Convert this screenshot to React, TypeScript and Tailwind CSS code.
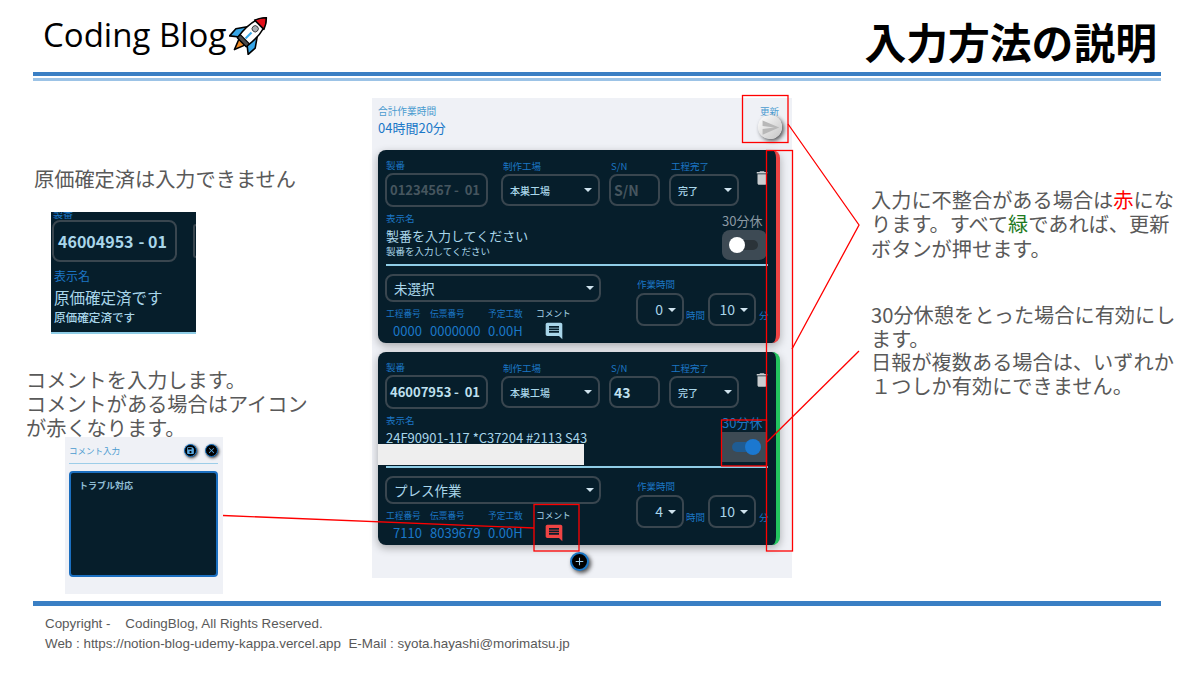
import React from 'react';

const commentPath =
  'M21.99 4c0-1.1-.89-2-1.99-2H4c-1.1 0-2 .9-2 2v12c0 1.1.9 2 2 2h14l4 4-.01-18zM18 14H6v-2h12v2zm0-3H6V9h12v2zm0-3H6V6h12v2z';
const trashPath = 'M6 19c0 1.1.9 2 2 2h8c1.1 0 2-.9 2-2V7H6v12zM19 4h-3.5l-1-1h-5l-1 1H5v2h14V4z';
const savePath =
  'M17 3H5c-1.11 0-2 .9-2 2v14c0 1.1.89 2 2 2h14c1.1 0 2-.9 2-2V7l-4-4zm-5 16c-1.66 0-3-1.34-3-3s1.34-3 3-3 3 1.34 3 3-1.34 3-3 3zm3-10H5V5h10v4z';
const closePath =
  'M19 6.41 17.59 5 12 10.59 6.41 5 5 6.41 10.59 12 5 17.59 6.41 19 12 13.41 17.59 19 19 17.59 13.41 12z';
const plusPath = 'M19 13h-6v6h-2v-6H5v-2h6V5h2v6h6v2z';
const sendPath = 'M2.01 21 23 12 2.01 3 2 10l15 2-15 2z';

function Icon({ d, className }: { d: string; className: string }) {
  return (
    <svg viewBox="0 0 24 24" className={className} fill="currentColor">
      <path d={d} />
    </svg>
  );
}

function Rocket() {
  return (
    <svg viewBox="0 0 40 40" className="w-[42px] h-[42px] shrink-0">
      <g transform="rotate(45 20 20)" stroke="#000" strokeWidth="1.5" strokeLinejoin="round">
        <path d="M14 16 L7 26 L7.5 35 L15 29 Z" fill="#38a7e8" />
        <path d="M26 16 L33 26 L32.5 35 L25 29 Z" fill="#38a7e8" />
        <path d="M16 31 L20 41 L24 31 Z" fill="#f08a24" />
        <path d="M20 -2 C27 5 28 16 26 31 H14 C12 16 13 5 20 -2Z" fill="#fff" />
        <path d="M20 -2 C23 1 25 4 26.2 7.5 H13.8 C15 4 17 1 20 -2Z" fill="#e3101a" />
        <rect x="14" y="27" width="12" height="4" fill="#4a4a4a" strokeWidth="1" />
        <circle cx="20" cy="13" r="3" fill="#a9adb3" strokeWidth="0.6" />
        <rect x="19" y="18" width="2" height="8" fill="#38a7e8" stroke="none" />
      </g>
    </svg>
  );
}

function Caret() {
  return <span className="w-0 h-0 border-x-[4px] border-t-[4px] border-x-transparent border-t-[#cfe3ee]" />;
}

function Label({ children, className = '' }: { children: React.ReactNode; className?: string }) {
  return <div className={`text-[9.5px] leading-[13px] text-[#1c76c4] whitespace-nowrap ${className}`}>{children}</div>;
}

function SelectBox({ value, className }: { value: string; className: string }) {
  return (
    <div className={`flex items-center justify-between border-2 border-[#39464f] rounded-lg text-[#a9d6ea] ${className}`}>
      <span className="font-medium text-[10px] whitespace-nowrap">{value}</span>
      <Caret />
    </div>
  );
}

function TimeBox({ value }: { value: string }) {
  return (
    <div className="w-[48px] h-[33px] flex items-center justify-end gap-[5px] pr-[6px] border-2 border-[#39464f] rounded-lg text-[#a9d6ea] text-[14px]">
      <span>{value}</span>
      <Caret />
    </div>
  );
}

type JobCard = {
  no: string;
  branch: string;
  sn: string;
  filled: boolean;
  name: string;
  sub: string;
  breakOn: boolean;
  work: string;
  hours: string;
  process: string;
  slip: string;
  edge: string;
  commentColor: string;
};

function Card({ job }: { job: JobCard }) {
  const inputColor = job.filled ? 'text-[#bfe0ef]' : 'text-[#46565f]';
  return (
    <div className={`w-[402px] h-[193px] rounded-lg bg-[#061e2b] border-r-4 ${job.edge} pt-[9px] pl-[7px] shadow-[0_3px_8px_rgba(0,0,0,0.3)] relative`}>
      <div className="flex items-start">
        <div className="w-[103px]">
          <Label className="pl-[1px]">製番</Label>
          <div className={`h-[34px] mt-[1px] flex items-center justify-between pl-[3px] pr-[6px] border-2 border-[#39464f] rounded-lg text-[13px] font-bold ${inputColor}`}>
            <span>{job.no}</span>
            <span>-&nbsp;&nbsp;{job.branch}</span>
          </div>
        </div>
        <div className="w-[99px] ml-[13px]">
          <Label className="pl-[2px] mt-[1px]">制作工場</Label>
          <SelectBox value="本巣工場" className="h-[32px] mt-[1px] pl-[7px] pr-[6px]" />
        </div>
        <div className="w-[51px] ml-[9px]">
          <Label className="pl-[2px] mt-[1px]">S/N</Label>
          <div className={`h-[32px] mt-[1px] flex items-center px-[3px] border-2 border-[#39464f] rounded-lg text-[14px] font-bold ${inputColor}`}>
            {job.sn}
          </div>
        </div>
        <div className="w-[70px] ml-[9px]">
          <Label className="pl-[2px] mt-[1px]">工程完了</Label>
          <SelectBox value="完了" className="h-[32px] mt-[1px] pl-[7px] pr-[5px]" />
        </div>
        <Icon d={trashPath} className="w-[18px] h-[18px] ml-[14px] mt-[10px] text-[#c9cdd0]" />
      </div>

      <div className="flex justify-between h-[50px] mt-[4px] pl-[1px] pr-[9px]">
        <div>
          <Label className="mt-[1px]">表示名</Label>
          <div className="text-[13px] leading-[17px] mt-[2px] text-[#a9d6ea] whitespace-nowrap">{job.name}</div>
          <div className="text-[9.5px] leading-[15px] text-[#a9d6ea] whitespace-nowrap">{job.sub}</div>
        </div>
        <div className="w-[45px] pt-[1px]">
          <div className={`text-[13px] leading-[17px] whitespace-nowrap ${job.breakOn ? 'text-[#1c76c4]' : 'text-[#8b99a3]'}`}>30分休</div>
          <div className={`h-[30px] mt-[1px] flex items-center pl-[10px] ${job.breakOn ? 'bg-[#3d4a54]' : 'bg-[#3d4a54] rounded-lg'}`}>
            <div className={`relative w-[26px] h-[10px] rounded-full ${job.breakOn ? 'bg-[#1f5c93]' : 'bg-[#2b3339]'}`}>
              <span className={`absolute top-[-3px] w-[16px] h-[16px] rounded-full ${job.breakOn ? 'right-[-3px] bg-[#1b78d0]' : 'left-[-3px] bg-white'}`} />
            </div>
          </div>
        </div>
      </div>

      <div className="h-[2px] bg-[#8fcde6] mt-[3px] ml-[1px] mr-[8px]" />

      <div className="flex mt-[8px]">
        <div className="w-[216px]">
          <div className="h-[28px] flex items-center justify-between pl-[7px] pr-[5px] border-2 border-[#39464f] rounded-lg text-[#a9d6ea] text-[13.5px]">
            <span>{job.work}</span>
            <Caret />
          </div>
          <div className="flex mt-[5px] pl-[1px]">
            <div className="w-[44px]">
              <Label className="!text-[8.7px]">工程番号</Label>
              <div className="text-[13px] leading-[18px] mt-[2px] pl-[7px] text-[#1b78c8]">{job.process}</div>
            </div>
            <div className="w-[58px]">
              <Label className="!text-[8.7px]">伝票番号</Label>
              <div className="text-[13px] leading-[18px] mt-[2px] text-[#1b78c8]">{job.slip}</div>
            </div>
            <div className="w-[48px]">
              <Label className="!text-[8.7px]">予定工数</Label>
              <div className="text-[13px] leading-[18px] mt-[2px] text-[#1b78c8]">0.00H</div>
            </div>
            <div className="w-[50px]">
              <Label className="!text-[8.7px] !text-[#a9d6ea]">コメント</Label>
              <Icon d={commentPath} className={`w-[20px] h-[20px] ml-[8px] mt-[1px] ${job.commentColor}`} />
            </div>
          </div>
        </div>
        <div className="ml-[35px] pt-[4px]">
          <Label className="pl-[1px]">作業時間</Label>
          <div className="flex mt-[2px]">
            <TimeBox value={job.hours} />
            <span className="self-end text-[9.5px] leading-[13px] text-[#1c76c4] mx-[2px] w-[20px] mb-[4px]">時間</span>
            <TimeBox value="10" />
            <span className="self-end text-[9.5px] leading-[13px] text-[#1c76c4] ml-[3px] mb-[4px]">分</span>
          </div>
        </div>
      </div>

      {job.filled && <div className="absolute left-0 top-[92px] w-[206px] h-[21px] bg-[#eeeeee]" />}
    </div>
  );
}

const jobs: JobCard[] = [
  {
    no: '01234567',
    branch: '01',
    sn: 'S/N',
    filled: false,
    name: '製番を入力してください',
    sub: '製番を入力してください',
    breakOn: false,
    work: '未選択',
    hours: '0',
    process: '0000',
    slip: '0000000',
    edge: 'border-r-[#ef4444]',
    commentColor: 'text-[#a9d6ea]',
  },
  {
    no: '46007953',
    branch: '01',
    sn: '43',
    filled: true,
    name: '24F90901-117 *C37204 #2113 S43',
    sub: '',
    breakOn: true,
    work: 'プレス作業',
    hours: '4',
    process: '7110',
    slip: '8039679',
    edge: 'border-r-[#22c55e]',
    commentColor: 'text-[#ef4444]',
  },
];

function RoundButton({ d }: { d: string }) {
  return (
    <div className="w-[13px] h-[13px] rounded-full bg-black border border-[#1b78c8] flex items-center justify-center shadow-[1px_1px_3px_rgba(0,0,0,0.8)]">
      <Icon d={d} className="w-[9px] h-[9px] text-[#5aa9e0]" />
    </div>
  );
}

export default function App() {
  return (
    <div className="relative w-[1200px] h-[674px] bg-white overflow-hidden font-['Noto_Sans_CJK_JP',sans-serif] text-[#595959]">
      {/* Slide header */}
      <header className="h-[72px] flex items-start justify-between pl-[43px] pr-[43px]">
        <div className="flex items-start pt-[14px]">
          <span className="font-['Open_Sans',sans-serif] text-[33px] leading-[42px] text-black">Coding Blog</span>
          <div className="mt-[-1px] ml-[3px]">
            <Rocket />
          </div>
        </div>
        <h1 className="text-[41.8px] leading-[60px] font-bold text-black pt-[11px] whitespace-nowrap">入力方法の説明</h1>
      </header>
      <div className="mx-[33px] w-[1128px] h-[4px] bg-[#3a7fc4]" />
      <div className="mx-[33px] w-[1128px] h-[3px] mt-[2px] bg-[#9cc3e6]" />

      {/* Slide body */}
      <div className="flex h-[520px]">
        <div className="w-[372px] shrink-0">
          <p className="ml-[34px] mt-[86px] text-[20.2px] leading-[24px] whitespace-nowrap">原価確定済は入力できません</p>

          <div className="ml-[51px] mt-[21px] w-[145px] h-[122px] bg-[#061e2b] overflow-hidden relative">
            <div className="absolute top-[-5px] left-[2px] text-[10px] leading-[13px] text-[#1c76c4]">製番</div>
            <div className="absolute top-[8px] left-[1px] w-[125px] h-[42px] flex items-center justify-between pl-[4px] pr-[8px] border-2 border-[#39464f] rounded-lg text-[#a9d6ea] text-[16px] font-bold">
              <span>46004953</span>
              <span>-&nbsp;01</span>
            </div>
            <div className="absolute top-[12px] right-0 w-[3px] h-[34px] border-l-2 border-y-2 border-[#39464f] rounded-l" />
            <div className="pt-[56px] pl-[3px]">
              <Label className="!text-[12px] !leading-[15px]">表示名</Label>
              <div className="text-[15.5px] leading-[22px] mt-[3px] text-[#a9d6ea]">原価確定済です</div>
              <div className="text-[11.6px] leading-[16px] mt-[1px] font-medium text-[#a9d6ea]">原価確定済です</div>
            </div>
            <div className="absolute bottom-0 left-0 right-0 h-[2px] bg-[#8fcde6]" />
          </div>

          <p className="ml-[26px] mt-[34px] text-[20.2px] leading-[24px] whitespace-nowrap">
            コメントを入力します。
            <br />
            コメントがある場合はアイコン
            <br />
            が赤くなります。
          </p>

          <div className="relative ml-[65px] mt-[-3px] w-[158px] h-[157px] bg-[#eff1f6] px-[4px] pt-[6px]">
            <div className="flex items-center justify-between h-[14px] pr-[1px]">
              <span className="text-[8.5px] text-[#4a9bd0]">コメント入力</span>
              <div className="flex gap-[8px]">
                <RoundButton d={savePath} />
                <RoundButton d={closePath} />
              </div>
            </div>
            <div className="h-[1px] bg-[#9ccde8] mt-[6px] mr-[1px]" />
            <div className="h-[106px] mt-[7px] mr-[1px] bg-[#061e2b] border-2 border-[#1b6fc0] rounded-sm pl-[8px] pt-[6px] text-[9px] font-bold text-[#8fbdd4]">
              トラブル対応
            </div>
          </div>
        </div>

        {/* Work entry panel */}
        <div className="relative w-[420px] h-[480px] mt-[17px] shrink-0 bg-[#eff1f6]">
          <div className="h-[52px] flex justify-between pl-[6px] pr-[10px] pt-[7px]">
            <div>
              <div className="text-[9.7px] leading-[13px] text-[#4a9bd0]">合計作業時間</div>
              <div className="text-[13px] leading-[18px] mt-[1px] text-[#1b78c8]">04時間20分</div>
            </div>
            <div className="flex flex-col items-end">
              <div className="text-[9.5px] leading-[13px] text-[#4a9bd0] mr-[3px]">更新</div>
              <div className="w-[24px] h-[24px] mt-[-3px] rounded-full bg-gradient-to-br from-[#ffffff] to-[#c4c4c4] flex items-center justify-center shadow-[2px_2px_4px_rgba(0,0,0,0.65)]">
                <Icon d={sendPath} className="w-[19px] h-[19px] text-[#b8b8b8]" />
              </div>
            </div>
          </div>
          <div className="flex flex-col gap-[9px] pl-[6px]">
            {jobs.map((job) => (
              <Card key={job.no} job={job} />
            ))}
          </div>
          <div className="flex justify-center mt-[7px] pr-[6px]">
            <div className="w-[19px] h-[19px] rounded-full bg-black border-2 border-[#1b78c8] flex items-center justify-center shadow-[2px_2px_4px_rgba(0,0,0,0.7)]">
              <Icon d={plusPath} className="w-[13px] h-[13px] text-[#9fd0ee]" />
            </div>
          </div>
        </div>

        <div className="ml-[79px] w-[311px] shrink-0">
          <p className="mt-[107px] text-[20.2px] leading-[24.3px] whitespace-nowrap">
            入力に不整合がある場合は<span className="text-[#ff0000]">赤</span>にな
            <br />
            ります。すべて<span className="text-[#1e7a1e]">緑</span>であれば、更新
            <br />
            ボタンが押せます。
          </p>
          <p className="mt-[42px] text-[20.2px] leading-[23.7px] whitespace-nowrap">
            30分休憩をとった場合に有効にし
            <br />
            ます。
            <br />
            日報が複数ある場合は、いずれか
            <br />
            １つしか有効にできません。
          </p>
        </div>
      </div>

      {/* Slide footer */}
      <div className="mx-[33px] w-[1128px] h-[5px] bg-[#3a7fc4]" />
      <footer className="pl-[45px] pt-[8px] font-['Liberation_Sans',sans-serif] text-[13.4px] leading-[20px] whitespace-pre">
        <div>Copyright -    CodingBlog, All Rights Reserved.</div>
        <div>Web : https://notion-blog-udemy-kappa.vercel.app  E-Mail : syota.hayashi@morimatsu.jp</div>
      </footer>

      {/* Red annotations drawn over the slide */}
      <svg viewBox="0 0 1200 674" className="absolute inset-0 w-[1200px] h-[674px] pointer-events-none" fill="none" stroke="#ff0000" strokeWidth="1.3">
        <rect x="742.5" y="95.5" width="45.5" height="47" />
        <rect x="766.5" y="150.5" width="26" height="400.5" />
        <rect x="721.5" y="420" width="45" height="46" />
        <rect x="534" y="504.5" width="45" height="46.5" />
        <polyline points="788,124 859,225 792,349" />
        <line x1="859" y1="351" x2="767" y2="442" />
        <line x1="223" y1="515.5" x2="534" y2="528" />
      </svg>
    </div>
  );
}
